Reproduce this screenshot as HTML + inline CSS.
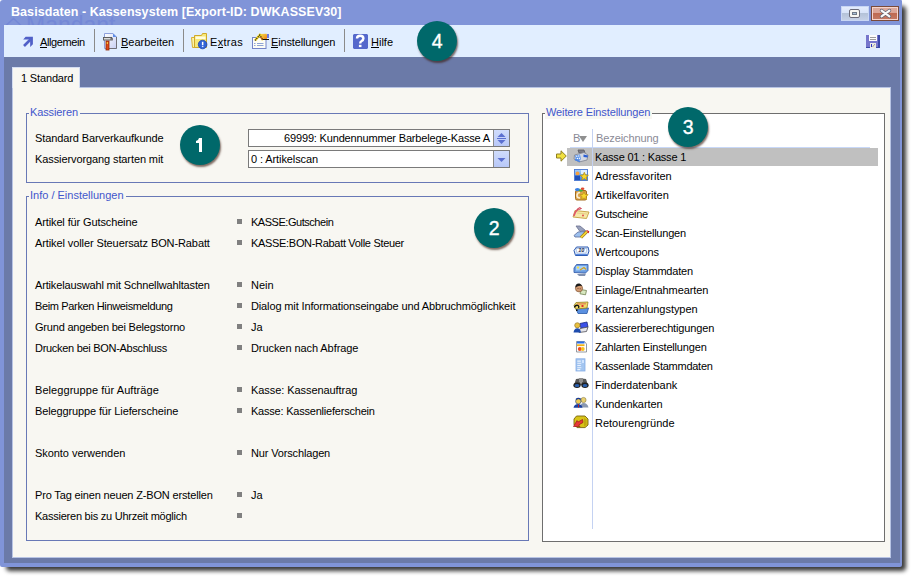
<!DOCTYPE html>
<html><head><meta charset="utf-8">
<style>
*{margin:0;padding:0;box-sizing:border-box}
html,body{width:912px;height:577px;overflow:hidden;background:#fff}
body{position:relative;font-family:"Liberation Sans",sans-serif;font-size:11px;color:#000;letter-spacing:-0.1px}
.a{position:absolute;white-space:nowrap}
#shadow{left:6px;top:6px;width:900px;height:565px;background:#3a3a3a;filter:blur(2px);border-radius:4px}
#win{left:0;top:0;width:902px;height:567px;background:#8094d8;border-radius:3px 1px 2px 2px;overflow:hidden}
#title{left:11px;top:4px;font-size:12.5px;font-weight:bold;color:#fff;line-height:16px;letter-spacing:0.07px}
#ghost{left:26px;top:14px;font-size:23px;color:#7488d6;font-weight:normal;line-height:23px;letter-spacing:0}
#tb{left:4px;top:25px;width:896px;height:32px;background:#e1eeff}
#frame{left:4px;top:57px;width:896px;height:506px;background:#6b7aa8}
#tab{left:12px;top:67px;width:68px;height:21px;background:#f8f7f2;border:1px solid #d4ddf2;border-bottom:none}
#panel{left:12px;top:87px;width:879px;height:471px;background:#f8f7f2;border:1px solid #b8c4e4}
.grp{border:1px solid #6878b6}
.glbl{color:#4256cc;background:#f8f7f2;padding:0 2px 0 1px;line-height:13px}
.lbl,.li,.tbt{line-height:13px}
.bul{width:5px;height:5px;background:#808080}
.badge{width:40px;height:40px;border-radius:50%;background:#00686a;box-shadow:1px 2px 2px rgba(60,30,20,.65)}
.badge svg{position:absolute;left:0;top:0}
.sep{width:1px;height:23px;background:#8a8a8a;top:29px}
.tbt u{text-decoration:none;border-bottom:1px solid #000;line-height:10px;display:inline-block}
.inp{background:#fff;border:1px solid #7a7a7a;height:18px}
.btn{background:linear-gradient(#d0dcfc,#b8c8f8);border-left:1px solid #8a8a8a}
</style></head><body>
<div class="a" id="shadow"></div>
<div class="a" id="win">
  <svg class="a" style="left:0;top:0" width="30" height="30" viewBox="0 0 30 30"><path d="M6 25.5 L13.5 18.5 L21 25.5" fill="none" stroke="#7488d6" stroke-width="1.6"/></svg><div class="a" id="ghost">Mandant</div>
  <div class="a" id="title">Basisdaten - Kassensystem [Export-ID: DWKASSEV30]</div>
  <!-- title buttons -->
  <div class="a" style="left:841px;top:6px;width:28px;height:15px;background:linear-gradient(#e4ecfc 0,#d6e2f8 50%,#b4c2d8 50%,#c4d0e6 100%);border:1px solid #c8d6f4"></div>
  <div class="a" style="left:849px;top:9px;width:11px;height:9px;border:1.5px solid #6a6a78;border-radius:2px;background:#f6f6f2"></div>
  <div class="a" style="left:852px;top:12px;width:5px;height:3px;border:1px solid #707a88;background:#a8c0d8"></div>
  <div class="a" style="left:871px;top:6px;width:28px;height:15px;background:linear-gradient(#dcaaa0 0,#dba496 50%,#bf6a52 50%,#c47a66 100%);border:1px solid #7a4a3a;box-shadow:inset 0 0 0 1px #f6d4cc"></div>
  <svg class="a" style="left:878px;top:7px" width="15" height="13" viewBox="0 0 15 13"><path d="M3.6 3.6 L11.4 9.4 M11.4 3.6 L3.6 9.4" stroke="#5c6070" stroke-width="3.6" stroke-linecap="round"/><path d="M3.6 3.6 L11.4 9.4 M11.4 3.6 L3.6 9.4" stroke="#fafafa" stroke-width="2.2" stroke-linecap="round"/></svg>
</div>
<div class="a" id="tb"></div>
<div class="a" id="frame"></div>
<div class="a" id="panel"></div>
<div class="a" id="tab"></div>
<div class="a" style="left:21px;top:72px;line-height:13px;letter-spacing:-0.15px">1 Standard</div>

<!-- toolbar -->
<svg class="a" style="left:18px;top:32px" width="20" height="20" viewBox="0 0 20 20"><path d="M5.2 7.45 L7.6 4.85 L14.9 4.85 L14.9 12.3 L12.2 14.9 L12.1 7.45 Z" fill="#5060c8"/><path d="M12.5 7.5 L6 14" stroke="#5060c8" stroke-width="2.6"/></svg>
<div class="a tbt" style="left:40px;top:36px;letter-spacing:-0.4px"><u>A</u>llgemein</div>
<div class="a sep" style="left:94px"></div>
<svg class="a" style="left:100px;top:31px" width="20" height="20" viewBox="0 0 20 20"><defs><linearGradient id="pg" x1="0" y1="0" x2="1" y2="1"><stop offset="0" stop-color="#ffffff"/><stop offset="1" stop-color="#c8d0f4"/></linearGradient></defs><path d="M4.5 2.5 L13 2.5 L16.5 6 L16.5 17.5 L4.5 17.5 Z" fill="url(#pg)" stroke="#8da0dc"/><path d="M16.5 6 L16.5 17.5 L6 17.5" fill="none" stroke="#707078"/><path d="M13 2.5 L13 6 L16.5 6 Z" fill="#5c8ce8"/><path d="M3.5 6.5 L11 6.5 Q12.5 6.5 12 9.5" fill="none" stroke="#404040" stroke-width="1.2"/><rect x="3.5" y="6.5" width="7.5" height="2.5" fill="#dadada" stroke="#5a5a5a" stroke-width=".9"/><rect x="6" y="10" width="3" height="9" fill="#e04818" stroke="#902808" stroke-width=".8"/><rect x="6.8" y="11" width="1" height="2" fill="#f8e040"/></svg>
<div class="a tbt" style="left:121px;top:36px;letter-spacing:0"><u>B</u>earbeiten</div>
<div class="a sep" style="left:183px"></div>
<svg class="a" style="left:188px;top:31px" width="20" height="20" viewBox="0 0 20 20"><path d="M3.5 6.5 L7 6.5 L7 16.5 L4.5 16.5 Z" fill="#fbf3a8" stroke="#d8b030"/><path d="M6.5 4.5 L13.5 4.5 L14.5 2.5 L18.5 2.5 L18.5 16.5 L6.5 16.5 Z" fill="#f6e878" stroke="#d0a828"/><path d="M7.5 5.5 L17.5 5.5 L17.5 8 L7.5 8 Z" fill="#fffce0"/><circle cx="14.6" cy="13.5" r="4.3" fill="#2f62d8" stroke="#1d44a8" stroke-width=".8"/><rect x="13.9" y="10.8" width="1.5" height="3.4" fill="#fff"/><rect x="13.9" y="14.9" width="1.5" height="1.2" fill="#dfe8ff"/></svg>
<div class="a tbt" style="left:210px;top:36px;letter-spacing:0.3px">E<u>x</u>tras</div>
<svg class="a" style="left:250px;top:31px" width="20" height="20" viewBox="0 0 20 20"><defs><linearGradient id="pen" x1="0" y1="0" x2="1" y2="1"><stop offset="0" stop-color="#f8e050"/><stop offset="1" stop-color="#e87810"/></linearGradient></defs><rect x="2.5" y="6.5" width="13.5" height="11" fill="#fdfdf6" stroke="#7484c8"/><rect x="4" y="12" width="1.5" height="1" fill="#8fa4d4"/><rect x="7" y="12" width="6.5" height="1" fill="#8fa4d4"/><rect x="4" y="14" width="1.5" height="1" fill="#8fa4d4"/><rect x="7" y="14" width="6.5" height="1" fill="#8fa4d4"/><path d="M9.5 3 L16.5 2.8 L17.5 5 L16.5 8.5 L12 8.5 Z" fill="url(#pen)"/><path d="M5 9.5 L9.8 4 L13 9" fill="none" stroke="#f0d020" stroke-width="2.4"/><path d="M5 9.5 L9.8 4 L13 9" fill="none" stroke="#181818" stroke-width="1.1" stroke-dasharray="1.1 1.1"/><circle cx="11" cy="6.5" r=".7" fill="#c03030"/><circle cx="12" cy="8" r=".7" fill="#c03030"/><path d="M12.5 8.5 L19 8.5" stroke="#101010" stroke-width="1"/><rect x="17" y="3" width="2" height="4" fill="#6c78e0"/></svg>
<div class="a tbt" style="left:271px;top:36px;letter-spacing:-0.15px"><u>E</u>instellungen</div>
<div class="a sep" style="left:344px"></div>
<svg class="a" style="left:350px;top:31px" width="20" height="20" viewBox="0 0 20 20"><path d="M4 3 L17 3 L18 4 L18 17 L17 18 L4 18 L3 17 L3 4 Z" fill="#5468cc"/><path d="M7 7.6 Q7 4.8 10.2 4.8 Q13.4 4.8 13.4 7.6 Q13.4 9.4 11.4 10.2 Q10.2 10.8 10.2 12.6" fill="none" stroke="#fff" stroke-width="2.4"/><rect x="8.9" y="13.8" width="2.6" height="2.3" fill="#fff"/></svg>
<div class="a tbt" style="left:371px;top:36px;letter-spacing:0"><u>H</u>ilfe</div>
<svg class="a" style="left:865px;top:34px" width="16" height="15" viewBox="0 0 16 15"><path d="M1 1 L15 1 L15 14 L2 14 L1 13 Z" fill="#7676cc"/><rect x="13" y="1" width="2" height="13" fill="#3c4aa8"/><rect x="1" y="13" width="14" height="1" fill="#3c4aa8"/><rect x="4" y="1" width="8" height="6" fill="#fcfcfc"/><rect x="5" y="3" width="6" height="1" fill="#9c9c9c"/><rect x="5" y="5" width="6" height="1" fill="#9c9c9c"/><rect x="5" y="9" width="6" height="5" fill="#ecece4"/><rect x="6" y="10" width="1" height="3" fill="#3038c8"/><path d="M7.5 13 L10 10" stroke="#a0a0a0" stroke-width="1"/></svg>

<!-- group 1 -->
<div class="a grp" style="left:26px;top:113px;width:503px;height:70px"></div>
<div class="a glbl" style="left:29px;top:106px;letter-spacing:-0.11px">Kassieren</div>
<div class="a lbl" style="left:35px;top:132px">Standard Barverkaufkunde</div>
<div class="a lbl" style="left:35px;top:153px">Kassiervorgang starten mit</div>
<div class="a inp" style="left:248px;top:129px;width:262px"></div>
<div class="a lbl" style="right:422px;top:132px;letter-spacing:-0.17px">69999: Kundennummer Barbelege-Kasse A</div>
<div class="a btn" style="left:493px;top:130px;width:16px;height:16px"></div>
<svg class="a" style="left:494px;top:131px" width="15" height="15" viewBox="0 0 15 15"><path d="M3.5 6 L7.5 2 L11.5 6 Z" fill="#5b6fd0"/><rect x="3" y="7" width="9" height="1" fill="#5b6fd0"/><path d="M3.5 9 L7.5 13 L11.5 9 Z" fill="#5b6fd0"/></svg>
<div class="a inp" style="left:248px;top:150px;width:262px"></div>
<div class="a lbl" style="left:251px;top:153px">0 : Artikelscan</div>
<div class="a btn" style="left:493px;top:151px;width:16px;height:16px"></div>
<svg class="a" style="left:494px;top:152px" width="15" height="15" viewBox="0 0 15 15"><path d="M3.5 6 L7.5 10 L11.5 6 Z" fill="#5b6fd0"/></svg>

<!-- group 2 -->
<div class="a grp" style="left:26px;top:196px;width:503px;height:345px"></div>
<div class="a glbl" style="left:29px;top:189px;letter-spacing:0">Info / Einstellungen</div>
<div class="a lbl" style="left:35px;top:216px;letter-spacing:-0.124px">Artikel für Gutscheine</div>
<div class="a bul" style="left:237px;top:219px"></div>
<div class="a lbl" style="left:251px;top:216px;letter-spacing:-0.464px">KASSE:Gutschein</div>
<div class="a lbl" style="left:35px;top:237px;letter-spacing:-0.103px">Artikel voller Steuersatz BON-Rabatt</div>
<div class="a bul" style="left:237px;top:240px"></div>
<div class="a lbl" style="left:251px;top:237px;letter-spacing:-0.314px">KASSE:BON-Rabatt Volle Steuer</div>
<div class="a lbl" style="left:35px;top:279px;letter-spacing:-0.157px">Artikelauswahl mit Schnellwahltasten</div>
<div class="a bul" style="left:237px;top:282px"></div>
<div class="a lbl" style="left:251px;top:279px;letter-spacing:0.0px">Nein</div>
<div class="a lbl" style="left:35px;top:300px;letter-spacing:-0.356px">Beim Parken Hinweismeldung</div>
<div class="a bul" style="left:237px;top:303px"></div>
<div class="a lbl" style="left:251px;top:300px;letter-spacing:-0.135px">Dialog mit Informationseingabe und Abbruchmöglichkeit</div>
<div class="a lbl" style="left:35px;top:321px;letter-spacing:-0.204px">Grund angeben bei Belegstorno</div>
<div class="a bul" style="left:237px;top:324px"></div>
<div class="a lbl" style="left:251px;top:321px;letter-spacing:0px">Ja</div>
<div class="a lbl" style="left:35px;top:342px;letter-spacing:-0.296px">Drucken bei BON-Abschluss</div>
<div class="a bul" style="left:237px;top:345px"></div>
<div class="a lbl" style="left:251px;top:342px;letter-spacing:-0.074px">Drucken nach Abfrage</div>
<div class="a lbl" style="left:35px;top:384px;letter-spacing:0.065px">Beleggruppe für Aufträge</div>
<div class="a bul" style="left:237px;top:387px"></div>
<div class="a lbl" style="left:251px;top:384px;letter-spacing:-0.068px">Kasse: Kassenauftrag</div>
<div class="a lbl" style="left:35px;top:405px;letter-spacing:-0.125px">Beleggruppe für Lieferscheine</div>
<div class="a bul" style="left:237px;top:408px"></div>
<div class="a lbl" style="left:251px;top:405px;letter-spacing:-0.213px">Kasse: Kassenlieferschein</div>
<div class="a lbl" style="left:35px;top:447px;letter-spacing:-0.053px">Skonto verwenden</div>
<div class="a bul" style="left:237px;top:450px"></div>
<div class="a lbl" style="left:251px;top:447px;letter-spacing:-0.15px">Nur Vorschlagen</div>
<div class="a lbl" style="left:35px;top:489px;letter-spacing:-0.159px">Pro Tag einen neuen Z-BON erstellen</div>
<div class="a bul" style="left:237px;top:492px"></div>
<div class="a lbl" style="left:251px;top:489px;letter-spacing:0px">Ja</div>
<div class="a lbl" style="left:35px;top:510px;letter-spacing:-0.239px">Kassieren bis zu Uhrzeit möglich</div>
<div class="a bul" style="left:237px;top:513px"></div>

<!-- right list -->
<div class="a" style="left:542px;top:113px;width:343px;height:429px;background:#fff;border:1px solid #6e6e6e"></div>
<div class="a glbl" style="left:545px;top:106px;letter-spacing:-0.12px">Weitere Einstellungen</div>
<div class="a li" style="left:573px;top:132px;color:#8a8a96">B</div>
<svg class="a" style="left:579px;top:136px" width="8" height="6" viewBox="0 0 8 6"><path d="M0 0 L8 0 L4 6 Z" fill="#909090"/></svg>
<div class="a li" style="left:596px;top:132px;color:#8a8a96">Bezeichnung</div>
<div class="a" style="left:567px;top:148px;width:311px;height:18px;background:#c0c0c0"></div>
<div class="a" style="left:570px;top:147px;width:300px;height:1px;background:#c8d8f8"></div>
<div class="a" style="left:592px;top:129px;width:1px;height:400px;background:#c4d2f2"></div>
<svg class="a" style="left:556px;top:150px" width="11" height="12" viewBox="0 0 11 12"><path d="M0.5 4 L5 4 L5 0.8 L10.3 6 L5 11.2 L5 8 L0.5 8 Z" fill="#f0e040" stroke="#908020" stroke-width="1"/></svg>
<div class="a li" style="left:595px;top:151px;letter-spacing:-0.206px">Kasse 01 : Kasse 1</div>
<svg class="a" style="left:570px;top:145px" width="22" height="22" viewBox="0 0 22 22"><path d="M8 5 L14 5 L15 8 L9 8 Z" fill="#7c7c86" stroke="#5a5a62" stroke-width=".8"/><path d="M4.5 10 L14 7.5 L18 10 L17 15 L9 17 L4 14 Z" fill="#d4d8e2" stroke="#868a96" stroke-width=".9"/><path d="M5 10.5 L10 9.5 L11 14.5 L6 15.5 Z" fill="#5c94ea"/><circle cx="6.8" cy="11.3" r=".7" fill="#fff"/><circle cx="8.8" cy="11" r=".7" fill="#fff"/><circle cx="7.4" cy="13.5" r=".7" fill="#fff"/><circle cx="9.4" cy="13.2" r=".7" fill="#fff"/><path d="M13.5 9.5 L18 10.5 L17.5 12.5 L13.5 12 Z" fill="#2a5ed4"/><path d="M5 14.5 L10 16.5" stroke="#4a84e4" stroke-width="1.5"/></svg>
<div class="a li" style="left:595px;top:170px;letter-spacing:0.021px">Adressfavoriten</div>
<svg class="a" style="left:570px;top:164px" width="22" height="22" viewBox="0 0 22 22"><defs><linearGradient id="g1" x1="0" y1="0" x2="0" y2="1"><stop offset="0" stop-color="#a8d0fa"/><stop offset="1" stop-color="#3c80e0"/></linearGradient></defs><rect x="4.5" y="5.5" width="13" height="11" fill="url(#g1)" stroke="#4a78d0" stroke-width=".9"/><rect x="11" y="6" width="6" height="4" fill="#e0eeff"/><circle cx="7.5" cy="9.5" r="1.9" fill="#f4a040"/><rect x="5" y="11.5" width="5" height="4.5" fill="#2050b8"/><path d="M14.30 8.30 L15.44 11.03 L18.39 11.27 L16.14 13.20 L16.83 16.08 L14.30 14.54 L11.77 16.08 L12.46 13.20 L10.21 11.27 L13.16 11.03 Z" fill="#f8d830" stroke="#b89010" stroke-width=".8"/></svg>
<div class="a li" style="left:595px;top:189px;letter-spacing:0.073px">Artikelfavoriten</div>
<svg class="a" style="left:570px;top:183px" width="22" height="22" viewBox="0 0 22 22"><rect x="5.5" y="7.5" width="11" height="9.5" rx="1.5" fill="#dca44a" stroke="#a46c1c"/><ellipse cx="7.5" cy="6.6" rx="2.6" ry="1.7" fill="#3a80e4"/><ellipse cx="10.8" cy="7.5" rx="2" ry="1.3" fill="#44b040"/><ellipse cx="12.6" cy="5.8" rx="1.8" ry="1.2" fill="#e04a30"/><path d="M10 9.5 Q7 9.5 7 12.5 Q7 15 10 15" fill="none" stroke="#f8ecd0" stroke-width="1.6"/><path d="M14.00 8.60 L15.16 11.40 L18.18 11.64 L15.88 13.61 L16.59 16.56 L14.00 14.98 L11.41 16.56 L12.12 13.61 L9.82 11.64 L12.84 11.40 Z" fill="#f8d830" stroke="#c09818" stroke-width=".8"/></svg>
<div class="a li" style="left:595px;top:208px;letter-spacing:-0.267px">Gutscheine</div>
<svg class="a" style="left:570px;top:202px" width="22" height="22" viewBox="0 0 22 22"><path d="M5 8.5 L19 10 L16.5 16.5 L3 15 Z" fill="#f6e9a8" stroke="#c4a040" stroke-width=".9"/><path d="M7 11 L17 12" stroke="#e0c880" stroke-width=".8"/><path d="M3.8 14 L5.5 10 L8 7" stroke="#e05868" stroke-width="1.7" fill="none"/><path d="M7.5 7 Q9.5 4.2 11.5 6.5 Q9.5 8.2 7.5 7 Z" fill="#f08898" stroke="#c03040" stroke-width=".7"/><circle cx="13" cy="13.5" r="1" fill="#e05050"/></svg>
<div class="a li" style="left:595px;top:227px;letter-spacing:-0.218px">Scan-Einstellungen</div>
<svg class="a" style="left:570px;top:221px" width="22" height="22" viewBox="0 0 22 22"><path d="M6 5 L10 5 L15.5 9.5 L10 10.5 Z" fill="#9aa2bc" stroke="#6a7090" stroke-width=".8"/><path d="M4 14.5 L8 11 L15 10.5 L11 16 L5 16 Z" fill="#9cc0ee" stroke="#5a6a98" stroke-width=".8"/><path d="M11 16.5 L17 10.5" stroke="#806010" stroke-width="3"/><path d="M11 16.5 L17 10.5" stroke="#f0d030" stroke-width="2"/><path d="M16.5 9.5 L18.5 10.5 L18 12" fill="none" stroke="#d02020" stroke-width="1.3"/></svg>
<div class="a li" style="left:595px;top:246px;letter-spacing:-0.05px">Wertcoupons</div>
<svg class="a" style="left:570px;top:240px" width="22" height="22" viewBox="0 0 22 22"><path d="M4 10.5 L6.5 7 L18 7 L19 11 L17.5 15.5 L5.5 15.5 Z" fill="#e4eefa" stroke="#2a58b0"/><path d="M6 8.5 L17 8.5 L16 13 L7 13 Z" fill="#fff" stroke="#8aa8d8" stroke-width=".6"/><text x="8.2" y="12.3" font-size="5.5" font-family="Liberation Sans" font-weight="bold" font-style="italic" fill="#1a2a50">10</text><path d="M6 14.5 L17 14.5" stroke="#5a8ae0" stroke-width="1.2"/></svg>
<div class="a li" style="left:595px;top:265px;letter-spacing:-0.2px">Display Stammdaten</div>
<svg class="a" style="left:570px;top:259px" width="22" height="22" viewBox="0 0 22 22"><path d="M4 9 L6.5 5.5 L18 5.5 L18 11.5 L15.5 14 L4 13.5 Z" fill="#6c9ee0" stroke="#3a62b0" stroke-width=".9"/><path d="M6 7 L16.5 7 L16.5 11 L6 11.5 Z" fill="#a8d0f8"/><circle cx="8" cy="8.6" r="1.1" fill="#f8e040"/><path d="M10 11 L14 8.5 L16 10.5" fill="none" stroke="#d0a020" stroke-width="1.3"/><path d="M7 15 L16 14.5 L15 17 L9 17 Z" fill="#8090b0"/></svg>
<div class="a li" style="left:595px;top:284px;letter-spacing:-0.075px">Einlage/Entnahmearten</div>
<svg class="a" style="left:570px;top:278px" width="22" height="22" viewBox="0 0 22 22"><path d="M11 11.5 L16.5 12.5 L15.5 16.8 L10 15.8 Z" fill="#d8e8c0" stroke="#708050" stroke-width=".8"/><circle cx="9" cy="10.3" r="3.6" fill="#d09a72" stroke="#845838" stroke-width=".7"/><path d="M5.3 9.5 Q5.5 5 9.5 5.5 Q11.5 6 12 8 Q9 6.8 5.3 9.5 Z" fill="#1a1a1a"/><circle cx="8" cy="10.5" r=".5" fill="#603020"/><circle cx="10.2" cy="10.8" r=".5" fill="#603020"/></svg>
<div class="a li" style="left:595px;top:303px;letter-spacing:-0.039px">Kartenzahlungstypen</div>
<svg class="a" style="left:570px;top:297px" width="22" height="22" viewBox="0 0 22 22"><path d="M6 12 L18.5 11 L17 16.5 L8 16.5 Z" fill="#5a90e0" stroke="#2a5aa8" stroke-width=".8"/><path d="M4 8.5 L6 5.5 L18 5 L17 11 L5.5 12 Z" fill="#f0dc68" stroke="#988020" stroke-width=".8"/><path d="M7 7 L16 6.8" stroke="#e07050" stroke-width="1"/><rect x="11.5" y="8" width="2" height="2" fill="#e03030"/><path d="M4.5 10.5 Q5 8 7.5 8.3 Q9.5 9 8.5 11" fill="none" stroke="#101010" stroke-width="1.3"/><rect x="6" y="12.5" width="1.5" height="1.5" fill="#101010"/></svg>
<div class="a li" style="left:595px;top:322px;letter-spacing:-0.132px">Kassiererberechtigungen</div>
<svg class="a" style="left:570px;top:316px" width="22" height="22" viewBox="0 0 22 22"><path d="M10 7.5 L17 6 L18 11 L11 12.5 Z" fill="#3a50e8" stroke="#1a2a80" stroke-width=".8"/><path d="M10 12.5 L18 11 L16.5 15.5 L9 16.5 Z" fill="#e4e4ea" stroke="#505058" stroke-width=".8"/><circle cx="7.3" cy="9.3" r="2.6" fill="#e8c040" stroke="#8a6a20" stroke-width=".6"/><path d="M3.5 16.6 Q4 12.5 7.3 12.3 Q10.5 12.5 11 16.6 Z" fill="#1e4cae"/></svg>
<div class="a li" style="left:595px;top:341px;letter-spacing:-0.173px">Zahlarten Einstellungen</div>
<svg class="a" style="left:570px;top:335px" width="22" height="22" viewBox="0 0 22 22"><path d="M6.5 6.5 L14.5 6.5 L16.5 9 L16.5 17 L6.5 17 Z" fill="#fff" stroke="#7a808a" stroke-width=".8"/><rect x="7" y="6.5" width="7.5" height="2" fill="#2a6ee8"/><rect x="7" y="9.3" width="7.5" height="1.8" fill="#f0b418"/><circle cx="9.8" cy="14" r="2" fill="#f04a20"/><circle cx="12.8" cy="14" r="1.9" fill="#f8c020"/></svg>
<div class="a li" style="left:595px;top:360px;letter-spacing:-0.25px">Kassenlade Stammdaten</div>
<svg class="a" style="left:570px;top:354px" width="22" height="22" viewBox="0 0 22 22"><rect x="6" y="4.8" width="9" height="12.2" fill="#a4c6f0" stroke="#86ace6" stroke-width=".8"/><rect x="7.3" y="6.6" width="3.5" height="1" fill="#fff"/><rect x="7.3" y="8.8" width="4" height="1" fill="#e8f0ff"/><rect x="7.3" y="11" width="3.5" height="1" fill="#e8f0ff"/><rect x="7.3" y="13.2" width="4" height="1" fill="#e8f0ff"/><rect x="7.3" y="15.2" width="3" height="1" fill="#fff"/><rect x="12" y="6" width="2" height="3" fill="#d0e4ff"/></svg>
<div class="a li" style="left:595px;top:379px;letter-spacing:-0.021px">Finderdatenbank</div>
<svg class="a" style="left:570px;top:373px" width="22" height="22" viewBox="0 0 22 22"><path d="M6 6 L10 5.5 L11 12 L4 12 Z" fill="#585858"/><path d="M12 5.5 L16 6 L18 12 L11 12 Z" fill="#585858"/><rect x="9" y="5" width="4" height="4" fill="#909090"/><ellipse cx="7" cy="12.3" rx="3.6" ry="2.7" fill="#202020"/><ellipse cx="15" cy="12.3" rx="3.6" ry="2.7" fill="#202020"/><ellipse cx="7" cy="12.5" rx="2.4" ry="1.5" fill="#2a60b0"/><ellipse cx="15" cy="12.5" rx="2.4" ry="1.5" fill="#2a60b0"/></svg>
<div class="a li" style="left:595px;top:398px;letter-spacing:-0.082px">Kundenkarten</div>
<svg class="a" style="left:570px;top:392px" width="22" height="22" viewBox="0 0 22 22"><circle cx="13.5" cy="8" r="2.6" fill="#e8d070" stroke="#8a7a40" stroke-width=".6"/><path d="M10 15.5 Q10.5 11 13.5 11 Q17.5 11 18.5 15.5 Z" fill="#8a98b0"/><circle cx="8.3" cy="9.3" r="2.7" fill="#f0cc50" stroke="#30508a" stroke-width=".7"/><path d="M6 7.5 Q8 5.5 11 7.3" fill="none" stroke="#1a3a90" stroke-width="1.2"/><path d="M3.5 15.8 Q4 12 8.5 12 Q12 12.5 12.5 15.8 Z" fill="#1a40a0"/><rect x="8" y="12.5" width="1" height="3" fill="#c02020"/></svg>
<div class="a li" style="left:595px;top:417px;letter-spacing:0.0px">Retourengründe</div>
<svg class="a" style="left:570px;top:411px" width="22" height="22" viewBox="0 0 22 22"><path d="M6.5 5 L15 5 L18 8 L18 14 L15 16.6 L7 16.6 L4 13.5 L4 8 Z" fill="#d8c418" stroke="#786410" stroke-width=".9"/><path d="M14 7 L16.5 8.5 L16.5 14 L14 15.5 Z" fill="#c0a810"/><path d="M12.5 8.5 L8 11 L7 9.5 L3.5 15.5 L10 15.5 L8.6 14 L13 11.5 Z" fill="#e83838" stroke="#981818" stroke-width=".7"/></svg>

<div class="a badge" style="left:180px;top:125px"><svg width="40" height="40" viewBox="0 0 40 40"><path d="M19 13 L22 13 L22 27 L19 27 L19 18 L16 18 L16 16 Q18.5 15.5 19 13 Z" fill="#fff"/></svg></div>
<div class="a badge" style="left:474px;top:208px"><svg width="40" height="40" viewBox="0 0 40 40"><text x="20" y="27" text-anchor="middle" font-family="Liberation Sans" font-size="19.5" fill="#fff" stroke="#fff" stroke-width="0.35">2</text></svg></div>
<div class="a badge" style="left:668px;top:107px"><svg width="40" height="40" viewBox="0 0 40 40"><text x="20" y="27" text-anchor="middle" font-family="Liberation Sans" font-size="19.5" fill="#fff" stroke="#fff" stroke-width="0.35">3</text></svg></div>
<div class="a badge" style="left:417px;top:21px"><svg width="40" height="40" viewBox="0 0 40 40"><text x="20" y="27" text-anchor="middle" font-family="Liberation Sans" font-size="19.5" fill="#fff" stroke="#fff" stroke-width="0.35">4</text></svg></div>
</body></html>
